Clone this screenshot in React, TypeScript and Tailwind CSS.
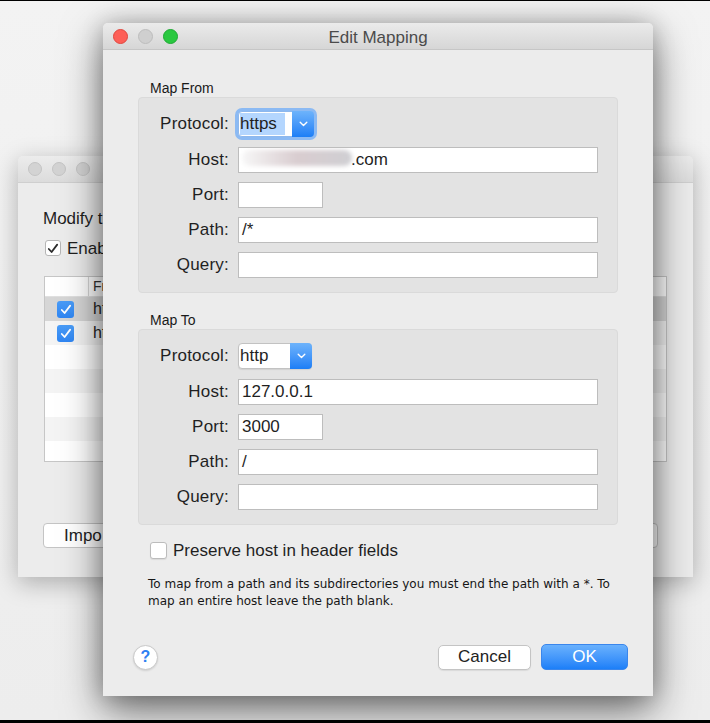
const Chevron = () => (
  <svg width="9" height="6" viewBox="0 0 9 6" fill="none">
    <path d="M1.2 1.2 L4.5 4.4 L7.8 1.2" stroke="white" strokeWidth="1.4" strokeLinecap="round" strokeLinejoin="round" />
  </svg>
);

const Check = ({ color }: { color: string }) => (
  <svg width="12" height="11" viewBox="0 0 12 11" fill="none">
    <path d="M1.8 6 L4.6 9 L10.2 1.6" stroke={color} strokeWidth="1.8" strokeLinecap="round" strokeLinejoin="round" />
  </svg>
);

const Select = ({ value, focused }: { value: string; focused?: boolean }) => (
  <div
    className={
      focused
        ? "flex h-[26px] w-[76px] rounded-[4px] bg-white border border-[#8fb8ec] ring-[3px] ring-[#8cbaf3]"
        : "flex h-[26px] w-[74px] rounded-[4px] bg-white border border-[#c2c2c2] shadow-[0_1px_1px_rgba(0,0,0,0.08)]"
    }
  >
    <div className="flex-1 flex items-stretch pl-[1px] py-[1px]">
      <span className={focused ? "flex items-center bg-[#b4d6fe] pr-[8px]" : "flex items-center"}>{value}</span>
    </div>
    <div className="w-[22px] -my-[1px] -mr-[1px] rounded-r-[4px] bg-linear-to-b from-[#6db3fb] to-[#1b7ef6] flex items-center justify-center">
      <Chevron />
    </div>
  </div>
);

const Field = ({ value, narrow, children }: { value?: string; narrow?: boolean; children?: React.ReactNode }) => (
  <div
    className={
      (narrow ? "w-[85px]" : "flex-1") +
      " h-[26px] bg-white border border-[#bdbdbd] flex items-center pl-[3px] overflow-hidden"
    }
  >
    {children ?? value}
  </div>
);

const Row = ({ label, children, first }: { label: string; children: React.ReactNode; first?: boolean }) => (
  <div className={first ? "flex items-center h-[26px] mb-[1px]" : "flex items-center h-[26px]"}>
    <div className="w-[90px] text-right text-[#1f1f1f] tracking-[0.2px]">{label}</div>
    <div className="ml-[9px] flex-1 flex">{children}</div>
  </div>
);

const Group = ({ title, children }: { title: string; children: React.ReactNode }) => (
  <div className="flex flex-col">
    <div className="ml-[12px] text-[14px] leading-[16px] text-[#1a1a1a] mb-[1px]">{title}</div>
    <div className="rounded-[4px] bg-[#e3e3e3] border border-[#dadada] pt-[13px] pb-[14px] pr-[19px] flex flex-col gap-[9px]">
      {children}
    </div>
  </div>
);

const Lights = ({ active }: { active?: boolean }) => (
  <div className="flex gap-[10px] items-center">
    <span className={active ? "w-[15px] h-[15px] rounded-full bg-[#fd5f57] border border-[#e0463e]" : "w-[14px] h-[14px] rounded-full bg-[#d3d3d3] border border-[#c4c4c4]"} />
    <span className={active ? "w-[15px] h-[15px] rounded-full bg-[#cfcfcf] border border-[#bdbdbd]" : "w-[14px] h-[14px] rounded-full bg-[#d3d3d3] border border-[#c4c4c4]"} />
    <span className={active ? "w-[15px] h-[15px] rounded-full bg-[#2ac840] border border-[#1ea933]" : "w-[14px] h-[14px] rounded-full bg-[#d3d3d3] border border-[#c4c4c4]"} />
  </div>
);

const rowShades = ["bg-[#d6d6d6]", "bg-[#f4f4f4]", "bg-white", "bg-[#f4f4f4]", "bg-white", "bg-[#f4f4f4]", "bg-white"];

// only the slivers of the back window that peek out from under the dialog carry text
const BackWindow = () => (
  <div className="absolute left-[18px] top-[155px] w-[675px] h-[421px] rounded-t-[5px] bg-[#ececec] flex flex-col shadow-[0_6px_24px_rgba(0,0,0,0.28)]">
    <div className="h-[27px] rounded-t-[5px] bg-linear-to-b from-[#ececec] to-[#dcdcdc] border-b border-[#cfcfcf] flex items-center pl-[10px]">
      <Lights />
    </div>
    <div className="flex flex-col pl-[25px] pr-[26px] pt-[23px]">
      <div className="whitespace-nowrap text-[17px] text-[#1f1f1f]">Modify t</div>
      <div className="flex items-center mt-[4px] ml-[2px] gap-[6px]">
        <span className="w-[16px] h-[16px] rounded-[3px] bg-white border border-[#b5b5b5] flex items-center justify-center">
          <Check color="#2b2b2b" />
        </span>
        <span className="whitespace-nowrap text-[17px] text-[#1f1f1f]">Enab</span>
      </div>
      <div className="mt-[15px] ml-[1px] h-[186px] bg-white border border-[#c6c6c6] overflow-hidden flex flex-col">
        <div className="h-[20px] shrink-0 flex items-center border-b border-[#e0e0e0]">
          <div className="w-[44px] h-full border-r border-[#d8d8d8]" />
          <div className="pl-[4px] text-[14px] text-[#333]">Fr</div>
        </div>
        {rowShades.map((c, i) => (
          <div key={i} className={c + " h-[24px] shrink-0 flex items-center"}>
            {i < 2 && (
              <>
                <span className="ml-[12px] w-[17px] h-[17px] rounded-[3px] bg-linear-to-b from-[#4a9cf7] to-[#2f86f3] flex items-center justify-center">
                  <Check color="white" />
                </span>
                <span className="ml-[19px] text-[16px] text-[#222]">ht</span>
              </>
            )}
          </div>
        ))}
      </div>
      <div className="mt-[61px] flex justify-between">
        <div className="w-[120px] h-[25px] rounded-[4px] bg-white border border-[#c4c4c4] flex items-center pl-[20px] text-[17px] text-[#222]">
          Impo
        </div>
        <div className="mr-[9px] w-[80px] h-[25px] rounded-[4px] bg-white border border-[#c4c4c4]" />
      </div>
    </div>
  </div>
);

const Dialog = () => (
  <div className="absolute left-[103px] top-[22px] w-[550px] h-[673px] rounded-t-[5px] bg-[#ececec] flex flex-col shadow-[0_14px_40px_rgba(0,0,0,0.55),0_0_22px_rgba(0,0,0,0.18)]">
    <div className="relative h-[27px] rounded-t-[5px] bg-linear-to-b from-[#ebebeb] to-[#d6d6d6] border-b border-[#c6c6c6] flex items-center pl-[10px]">
      <Lights active />
      <div className="absolute inset-0 pt-[3px] flex items-center justify-center text-[17px] text-[#4b4b4b] pointer-events-none">
        Edit Mapping
      </div>
    </div>
    <div className="flex flex-col pl-[35px] pr-[35px] pt-[30px] text-[17px] text-[#1f1f1f]">
      <Group title="Map From">
        <Row label="Protocol:" first>
          <Select value="https" focused />
        </Row>
        <Row label="Host:">
          <Field>
            <span className="w-[110px] h-[16px] -mt-[4px] rounded-full bg-linear-to-r from-[#f7f7f7] via-[#d9cdd0] to-[#cfcfd3] blur-[2px]" />
            <span className="-ml-[1px]">.com</span>
          </Field>
        </Row>
        <Row label="Port:">
          <Field narrow />
        </Row>
        <Row label="Path:">
          <Field value="/*" />
        </Row>
        <Row label="Query:">
          <Field />
        </Row>
      </Group>
      <div className="mt-[19px]">
        <Group title="Map To">
          <Row label="Protocol:" first>
            <Select value="http" />
          </Row>
          <Row label="Host:">
            <Field value="127.0.0.1" />
          </Row>
          <Row label="Port:">
            <Field narrow value="3000" />
          </Row>
          <Row label="Path:">
            <Field value="/" />
          </Row>
          <Row label="Query:">
            <Field />
          </Row>
        </Group>
      </div>
      <div className="flex items-center mt-[13px] ml-[12px] gap-[6px]">
        <span className="w-[17px] h-[17px] rounded-[3px] bg-white border border-[#bcbcbc] shadow-[0_1px_1px_rgba(0,0,0,0.08)]" />
        <span>Preserve host in header fields</span>
      </div>
      <div className="mt-[12px] ml-[10px] font-['DejaVu_Sans',sans-serif] text-[12px] leading-[17px] text-[#161616]">
        To map from a path and its subdirectories you must end the path with a *. To
        <br />
        map an entire host leave the path blank.
      </div>
    </div>
    <div className="mt-auto mb-[26px] pl-[30px] pr-[25px] flex items-center">
      <div className="w-[25px] h-[25px] rounded-full bg-white border border-[#c9c9c9] shadow-[0_1px_2px_rgba(0,0,0,0.12)] flex items-center justify-center text-[16px] font-bold text-[#2e80f2]">
        ?
      </div>
      <div className="ml-auto w-[93px] h-[25px] rounded-[5px] bg-white border border-[#c4c4c4] shadow-[0_1px_1px_rgba(0,0,0,0.08)] flex items-center justify-center text-[17px] text-[#222]">
        Cancel
      </div>
      <div className="ml-[10px] w-[87px] h-[26px] rounded-[5px] bg-linear-to-b from-[#69b1fd] to-[#1b7ff8] border border-[#3a86ec] flex items-center justify-center text-[17px] text-white">
        OK
      </div>
    </div>
  </div>
);

export default function App() {
  return (
    <div className="w-[710px] h-[723px] flex flex-col bg-black font-['Liberation_Sans',Arial,sans-serif]">
      <div className="h-[1px] shrink-0" />
      <div className="relative flex-1 overflow-hidden bg-linear-to-b from-[#f3f3f3] to-[#ededed]">
        <BackWindow />
        <Dialog />
      </div>
      <div className="h-[3px] shrink-0" />
    </div>
  );
}
